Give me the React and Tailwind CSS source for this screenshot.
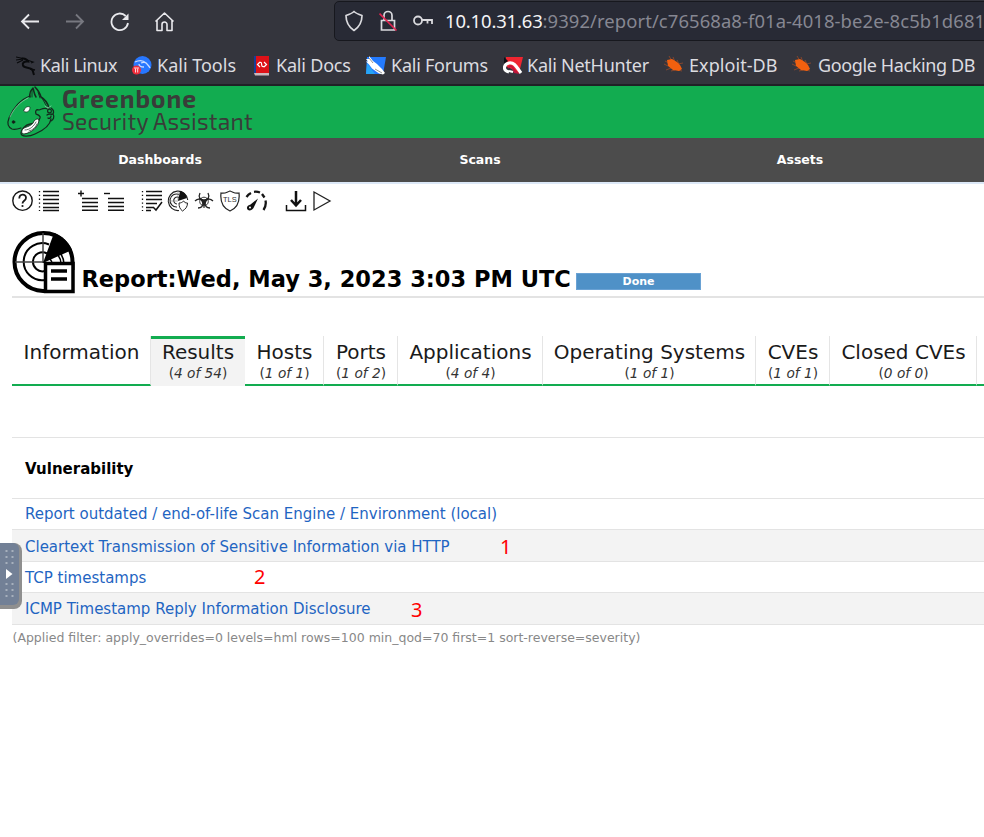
import React from "react";

const bookmarks = [
  { label: "Kali Linux", Icon: KaliIcon, box: "w-[116px] pl-[24px] tracking-[-0.4px]" },
  { label: "Kali Tools", Icon: ToolsIcon, box: "w-[121px] pl-[25px]" },
  { label: "Kali Docs", Icon: DocsIcon, box: "w-[113px] pl-[23px] tracking-[-0.2px]" },
  { label: "Kali Forums", Icon: ForumsIcon, box: "w-[137px] pl-[25px] tracking-[-0.24px]" },
  { label: "Kali NetHunter", Icon: HunterIcon, box: "w-[161px] pl-[24px] tracking-[-0.24px]" },
  { label: "Exploit-DB", Icon: BugIcon, box: "w-[128px] pl-[25px] tracking-[0.06px]" },
  { label: "Google Hacking DB", Icon: BugIcon, box: "w-[190px] pl-[26px] tracking-[-0.38px]" },
];

const tabs = [
  { label: "Information", width: "w-[139px]" },
  { label: "Results", count: "4 of 54", width: "w-[94px]", active: true },
  { label: "Hosts", count: "1 of 1", width: "w-[79px]" },
  { label: "Ports", count: "1 of 2", width: "w-[74px]" },
  { label: "Applications", count: "4 of 4", width: "w-[145px]" },
  { label: "Operating Systems", count: "1 of 1", width: "w-[213px]" },
  { label: "CVEs", count: "1 of 1", width: "w-[74px]" },
  { label: "Closed CVEs", count: "0 of 0", width: "w-[147px]" },
];

const rows = [
  { name: "Report outdated / end-of-life Scan Engine / Environment (local)", box: "h-[31px] bg-white leading-[31px]" },
  { name: "Cleartext Transmission of Sensitive Information via HTTP", box: "h-[32px] bg-[#f3f3f3] leading-[34px]", mark: "1", gap: "w-[475px]" },
  { name: "TCP timestamps", box: "h-[31px] bg-white leading-[33px]", mark: "2", gap: "w-[229px]", markBox: "-mt-[2px]" },
  { name: "ICMP Timestamp Reply Information Disclosure", box: "h-[32px] bg-[#f3f3f3] leading-[33px]", mark: "3", gap: "w-[386px]" },
];

function KaliIcon() {
  return (
    <svg width="20" height="20" viewBox="0 0 20 20" fill="none" stroke="#090a0c">
      <path d="M0 1l7 1.500M0 4l7-1M1 7l6-3" strokeWidth="1.200" />
      <path d="M6 2.500c3-.5 5 1 6 3-4-.5-6 1.500-5 4 1.500 3 7 1.500 9.500 4.500l1.500 5" strokeWidth="2" />
      <path d="M11 4l6 2-2 1M14 13l5 1" strokeWidth="1.300" />
    </svg>
  );
}

function ToolsIcon() {
  return (
    <svg width="20" height="20" viewBox="0 0 20 20" fill="none">
      <circle cx="10.500" cy="9" r="9" fill="#2777ff" />
      <path d="M3 6c4-2 8-2 11 1M9 7c2-1 5-1 6 1 1 1 2 2 3 4M7 8c0 2 2 3 5 3" stroke="#c9dcff" strokeWidth="1.300" />
      <circle cx="4.500" cy="14" r="4.500" fill="#ee2d3a" />
      <path d="M2 12h5M3.500 12.500v4M5.700 12.500v4" stroke="#ffd7dc" />
    </svg>
  );
}

function DocsIcon() {
  return (
    <svg width="17" height="20" viewBox="0 0 17 20" fill="none">
      <path d="M1 0h15v17H1z" fill="#dd1118" />
      <path d="M1 0h2v17H1z" fill="#173d98" />
      <path d="M1 17h15v2.500H2z" fill="#c9b8bd" />
      <path d="M7 6L4.500 8.500 7 11M11 6l2.500 2.500L11 11M7 6.500c3-1 0 5 4 4" stroke="#fff" strokeWidth="1.200" />
    </svg>
  );
}

function ForumsIcon() {
  return (
    <svg width="20" height="20" viewBox="0 0 20 20">
      <path d="M1 1h19l-3 17H0z" fill="#247bff" />
      <path d="M1 7l8 11H0z" fill="#27a5f7" />
      <path d="M0 3l3 0 0-3 4 5 4 3 5 5 3 4-2 1.500-4-1-7-5-3-4-3-3 2 0z" fill="#fff" />
      <path d="M3 2l4 5M9 13l7 4" stroke="#777" strokeWidth=".8" />
    </svg>
  );
}

function HunterIcon() {
  return (
    <svg width="20" height="20" viewBox="0 0 20 20" fill="none">
      <path d="M3 1h17l-4 16L3 10z" fill="#ef2530" />
      <path d="M8 11l9 7-6-1z" fill="#c0163c" />
      <path d="M1 1l4 4-4 3z" fill="#101117" />
      <path d="M6 16C-1 14 1 8 6 7c6-1 8 5 12 10" stroke="#fff" strokeWidth="3.200" />
      <path d="M5 12c3-4 5-1 7 3" stroke="#c0163c" strokeWidth="1.500" />
      <path d="M6 15l4 1" stroke="#fff" strokeWidth="2" />
    </svg>
  );
}

function BugIcon() {
  return (
    <svg width="20" height="18" viewBox="0 0 20 18">
      <path d="M1 5l4 2M5 0l3 5M9 1l2 5M13 4l2 4M14 8l5-1M0 8l4 2M2 14l5-2M7 15l4-1M14 14l4 1" stroke="#8d472b" strokeWidth=".9" fill="none" />
      <path d="M3 4l5-1 5 3 3 3 2 4-3 2-6-1-5-4z" fill="#f2600f" />
    </svg>
  );
}

function DogLogo() {
  return (
    <svg className="h-[52px] w-[62px] shrink-0" viewBox="0 0 62 52" fill="none" stroke="#14291d" strokeLinecap="round" strokeLinejoin="round">
      <path d="M30 10C21 13 13 22 9 32c-2 5-1 9 3 11 3 1 6 0 9-1" strokeWidth="1.200" />
      <path d="M28 12C20 16 14 22 10 31" stroke="#9bdcb3" strokeWidth="0.700" />
      <path d="M30 11c-1-4 0-6 3-9 1 3 1 6 3 9M35 1c3 3 5 6 6 10 5 3 7 7 8 11" strokeWidth="1.500" />
      <path d="M32 4v7M38 6l2 6M42 12l5 9" strokeWidth="0.900" />
      <path d="M24 24c1-3 4-4 6-3 0 4-2 5-4 5-2 0-3-1-2-2z" fill="#fff" strokeWidth="0.700" />
      <circle cx="13.500" cy="36" r="1.300" fill="#101c16" />
      <path d="M48 23c-4-2-6 0-9 1-3-1-4 1-3 4 2 1 5 2 4 4-2 5-6 5-10 6-5 1-9 6-9 9 0 4 8 4 14 1 7-3 15-8 16-15" strokeWidth="1.300" />
      <path d="M39 34c0 6-7 13-15 14-3 0-3-4 0-6 5-2 9-3 10-7 2-2 4-3 5-1z" fill="#fff" strokeWidth="0.900" />
      <path d="M25 44c5 0 9-4 11-8M29 45c4-1 7-4 8-7" stroke="#3f4f45" strokeWidth="0.800" />
      <circle cx="49.500" cy="25" r="1.900" strokeWidth="1.200" />
      <path d="M51 22c3 2 3 4 2 6 2 3 0 6-2 7M47 29c2-2 4 0 6-1M48 32c1 1 3 0 3-2" strokeWidth="1.300" />
      <path d="M48 22l3-2M45 20l3 2" stroke="#a3dfb8" strokeWidth="0.700" />
    </svg>
  );
}

function Lines({ sign, check }) {
  return (
    <svg width="22" height="22" viewBox="0 0 22 22" stroke="#111" fill="none">
      {sign ? (
        <>
          <path d="M4 8.500h16M4 12.500h16M4 16.500h16M4 20.300h16" strokeWidth="1.500" />
          <path d={sign === "plus" ? "M0 3.500h6M3 .5v6" : "M0 3.500h6"} strokeWidth="1.400" />
        </>
      ) : (
        <>
          <path d={check ? "M5 1.500h16M5 5.500h16M5 9.500h16M5 13.500h11M5 17.500h7M5 20.500h5" : "M5 1.500h16M5 5.500h16M5 9.500h16M5 13.500h16M5 17.500h16M5 20.500h16"} strokeWidth="1.500" />
          <path d="M1.500 1v20" strokeDasharray="1.300 2.500" strokeWidth="1.300" />
          {check && <path d="M12 17l3 3 6-8" strokeWidth="1.500" />}
        </>
      )}
    </svg>
  );
}

function HelpIcon() {
  return (
    <svg width="22" height="22" viewBox="0 0 22 22" fill="none" stroke="#181818">
      <circle cx="10.500" cy="10.700" r="9.700" strokeWidth="1.400" />
      <path d="M7.300 8.500c0-5 6.700-5 6.700-.7 0 3-3.500 3-3.500 5.700" strokeWidth="1.800" />
      <circle cx="10.500" cy="16" r="1.100" fill="#181818" stroke="none" />
    </svg>
  );
}

function RadarIcon() {
  return (
    <svg width="22" height="22" viewBox="0 0 22 22" fill="none" stroke="#222">
      <path d="M12 20.500A9.700 9.700 0 1 1 20.700 10" strokeWidth="1.200" />
      <path d="M10 17A6.500 6.500 0 1 1 12 4.500M10 14A3.500 3.500 0 1 1 12 7.500" strokeWidth="1.100" />
      <path d="M11 1v9M1 11h10" stroke="#888" strokeWidth=".7" />
      <path d="M11 11l2-10c4 1 6 3 7 7z" fill="#111" stroke="none" />
      <path d="M12 13c2 0 3-.5 4.500-2 1 1.500 2 2 4 2 0 4-2 6-5 8-2.500-2-3.500-4-3.500-8z" fill="#fff" strokeWidth="1" />
    </svg>
  );
}

function BiohazardIcon() {
  return (
    <svg width="22" height="22" viewBox="0 0 22 22" fill="none" stroke="#222">
      <path d="M7 3c-2 4 0 7 4 7s6-3 4-7M2 11c4-4 8-1 8 2 0 3-2 5-5 5M20 11c-4-4-8-1-8 2 0 3 2 5 5 5" strokeWidth="1.300" />
      <circle cx="11" cy="11.500" r="4.300" strokeWidth=".9" />
      <path d="M8 10h6l-2 5h-2z" fill="#222" stroke="none" />
      <path d="M11 12v6M10 10L6 8M12 10l4-2" strokeWidth="1.100" />
    </svg>
  );
}

function TlsIcon() {
  return (
    <svg width="22" height="22" viewBox="0 0 22 22" fill="none" stroke="#222">
      <path d="M2 3c4 1 6-1 9-2 3 1 5 3 9 2 1 9-2 15-9 18C4 18 1 12 2 3z" strokeWidth="1.200" />
      <text x="4" y="12" fill="#333" stroke="none" fontFamily="Liberation Sans" fontSize="7.500">TLS</text>
    </svg>
  );
}

function GaugeIcon() {
  return (
    <svg width="22" height="22" viewBox="0 0 22 22" fill="none" stroke="#151515">
      <path d="M1.500 7a12 12 0 0 1 4.500-4M9 1.800a12 12 0 0 1 6 .7M17 4l2.500 3.500M20.500 10.500c.8 3.500 0 6.500-2 9.500" strokeWidth="2.300" />
      <path d="M13 8.500L8.500 18c-2 3.500-7 3-6.500-.5.300-2 2-2.500 3.500-3z" fill="#111" stroke="none" />
      <circle cx="5" cy="17.500" r="1" fill="#fff" stroke="none" />
    </svg>
  );
}

function DownloadIcon() {
  return (
    <svg width="22" height="22" viewBox="0 0 22 22" fill="none" stroke="#101010">
      <path d="M1.500 15v5.500h19V15" strokeWidth="1.500" />
      <path d="M11 1v14M6 10l5 5.500 5-5.500" strokeWidth="2.500" />
    </svg>
  );
}

function PlayIcon() {
  return (
    <svg width="22" height="22" viewBox="0 0 22 22" fill="none" stroke="#222">
      <path d="M2 2l16 9-16 9z" strokeWidth="1.300" />
    </svg>
  );
}

function ReportIcon() {
  return (
    <svg className="h-[64px] w-[64px] shrink-0" viewBox="0 0 64 64" fill="none" stroke="#000">
      <path d="M34 61h-3A29 29 0 1 1 60.500 32v8" strokeWidth="4" />
      <path d="M33 50A18.500 18.500 0 1 1 37 14.500M33 41A9.500 9.500 0 1 1 35 23.500" strokeWidth="2" />
      <path d="M31 3v30M3 32h29" stroke="#444" strokeWidth="1.500" />
      <path d="M31 33L42 3c8 3 14 8 18 17z" fill="#000" stroke="none" />
      <path d="M38 29q2 2 2 5M46 25q3 4 3 9M49 24q3 5 3 10" strokeWidth="1.500" />
      <path d="M33.500 33.500h27.500v28H33.500z" fill="#fff" strokeWidth="3.500" />
      <path d="M39 41h16M39 49h16" strokeWidth="3.500" />
    </svg>
  );
}

function BrowserChrome() {
  return (
    <header className="h-[86px] overflow-hidden border-b-2 border-[#202126] bg-[#34353d] font-['Noto_Sans','Open_Sans',sans-serif] text-[#dcdce0]">
      <div className="flex h-[42px] pl-[20px]">
        <svg className="mt-[11px] mr-[25px] shrink-0" width="20" height="22" viewBox="0 0 20 22" fill="none" stroke="#e9e9ed" strokeWidth="1.800">
          <path d="M19 10.500H2M9 3.500l-7 7 7 7" />
        </svg>
        <svg className="mt-[11px] mr-[25px] shrink-0" width="20" height="22" viewBox="0 0 20 22" fill="none" stroke="#777880" strokeWidth="1.800">
          <path d="M1 10.500h17M11 3.500l7 7-7 7" />
        </svg>
        <svg className="mt-[11px] mr-[24px] shrink-0" width="20" height="22" viewBox="0 0 20 22" fill="none" stroke="#e9e9ed" strokeWidth="1.800">
          <path d="M18 12a8.300 8.300 0 1 1-2.300-7" />
          <path d="M18.500 2.500v6.500H12z" fill="#e9e9ed" stroke="none" />
        </svg>
        <svg className="mt-[11px] mr-[158px] shrink-0" width="22" height="22" viewBox="0 0 22 22" fill="none" stroke="#e9e9ed" strokeWidth="1.600" strokeLinejoin="round">
          <path d="M1.500 10.500l9-8.500 9 8.500M3 9.500v10h5v-6a2.500 2.500 0 0 1 5 0v6h5v-10" />
        </svg>
        <div className="mt-px flex h-[40px] w-[660px] shrink-0 overflow-hidden rounded-l-[5px] border border-[#17181e] bg-[#282a35] pl-[9px]">
          <svg className="mt-[8px] mr-[15px] shrink-0" width="20" height="22" viewBox="0 0 20 22" fill="none" stroke="#dadade" strokeWidth="1.700" strokeLinejoin="round">
            <path d="M10 1.500c2 2 5 3 8 4 0 7-2 11-8 15-6-4-8-8-8-15 3-1 6-2 8-4z" />
          </svg>
          <svg className="mt-[8px] mr-[13px] shrink-0" width="20" height="22" viewBox="0 0 20 22" fill="none" stroke="#dadade" strokeWidth="1.700">
            <path d="M2.500 10.500h13v9.500h-13zM5 10V5.500a4 4 0 0 1 8 0V10" />
            <path d="M.5 3.500l17 17" stroke="#df2450" />
          </svg>
          <svg className="mt-[9px] mr-[11px] shrink-0" width="22" height="18" viewBox="0 0 22 18" fill="none" stroke="#dadade" strokeWidth="1.800">
            <circle cx="6" cy="9.500" r="4" />
            <path d="M10 9h10v4M15.500 9v3.500" />
          </svg>
          <div className="mt-[7px] text-[18.450px] leading-[24px] tracking-[0.080px] whitespace-nowrap text-[#868792]">
            <span className="tracking-[-0.150px] text-[#f4f4f6]">10.10.31.63</span>:9392/report/c76568a8-f01a-4018-be2e-8c5b1d681
          </div>
        </div>
      </div>
      <nav className="flex h-[42px] pt-[13px] pl-[16px]">
        {bookmarks.map(({ label, Icon, box }) => (
          <a key={label} className={`relative h-[22px] shrink-0 text-[18px] leading-[21px] whitespace-nowrap ${box}`}>
            <span className="absolute top-px left-0"><Icon /></span>
            {label}
          </a>
        ))}
      </nav>
    </header>
  );
}

function Toolbar() {
  return (
    <div className="flex h-[42px] pt-[6px] pl-[12px]">
      <div className="flex w-[66px] gap-[4px]"><HelpIcon /><Lines /></div>
      <div className="flex w-[63px] gap-[4px]"><Lines sign="plus" /><Lines sign="minus" /></div>
      <div className="flex w-[144px] gap-[4px]">
        <Lines check /><RadarIcon /><BiohazardIcon /><TlsIcon /><GaugeIcon />
      </div>
      <div className="flex gap-[5px]"><DownloadIcon /><PlayIcon /></div>
    </div>
  );
}

export default function App() {
  return (
    <div className="relative h-[837px] w-[984px] overflow-hidden bg-white font-['DejaVu_Sans',sans-serif] text-black">
      <BrowserChrome />
      <div className="flex h-[52px] bg-[#12ac50] font-['Exo_2','Noto_Sans',sans-serif] text-[#393c39]">
        <DogLogo />
        <div>
          <div className="h-[25px] text-[24.500px] leading-[25px] font-bold tracking-[1px] whitespace-nowrap">Greenbone</div>
          <div className="h-[24px] text-[22.800px] leading-[21px] tracking-[0.250px] whitespace-nowrap">Security Assistant</div>
        </div>
      </div>
      <nav className="flex h-[44px] w-[1280px] bg-[#4c4c4c] text-center text-[12.500px] leading-[43px] font-bold text-white">
        <a className="w-[320px]">Dashboards</a>
        <a className="w-[320px]">Scans</a>
        <a className="w-[320px]">Assets</a>
      </nav>
      <div className="h-[2px] bg-[#dce8f7]" />
      <Toolbar />
      <main className="pl-[12px]">
        <div className="flex h-[72px] border-b-2 border-[#e3e3e3] pt-[4px]">
          <ReportIcon />
          <h1 className="mt-[35px] ml-[5.500px] h-[28px] w-[494.500px] text-[22.500px] leading-[28px] font-bold whitespace-nowrap">
            Report:Wed, May 3, 2023 3:03 PM UTC
          </h1>
          <div className="mt-[43px] h-[17px] w-[125px] border border-[#6aa2d4] bg-[#4f91c7] text-center text-[11px] leading-[16px] font-bold text-white">Done</div>
        </div>
        <div className="mt-[38px] flex h-[50px]">
          {tabs.map((tab) => (
            <div
              key={tab.label}
              className={`shrink-0 text-center whitespace-nowrap ${tab.width} ${tab.active ? "border-t-[3px] border-[#12ac50] bg-[#f3f3f3] pt-px" : "border-r border-b-2 border-r-[#e5e5e5] border-b-[#12ac50] pt-[4px] pl-px"}`}
            >
              <div className="h-[24px] text-[20px] leading-[24px] text-[#1a1a1a]">{tab.label}</div>
              {tab.count && <div className="text-[13.700px] leading-[18px] text-[#333]">(<i>{tab.count}</i>)</div>}
            </div>
          ))}
          <div className="flex-1 border-b-2 border-[#12ac50]" />
        </div>
        <div className="mt-[51px] h-[62px] border-y border-[#e3e3e3] pl-[13px] text-[15px] leading-[63px] font-bold">Vulnerability</div>
        {rows.map((row) => (
          <div key={row.name} className={`flex border-b border-[#e3e3e3] pl-[13px] text-[15px] whitespace-nowrap text-[#1f65c2] ${row.box}`}>
            <a className={`shrink-0 ${row.gap ?? ""}`}>{row.name}</a>
            {row.mark && <span className={`font-['Noto_Sans',sans-serif] text-[20px] text-[#ff0000] ${row.markBox ?? ""}`}>{row.mark}</span>}
          </div>
        ))}
        <div className="mt-[2px] pl-[0.500px] text-[12.500px] leading-[22px] whitespace-nowrap text-[#888]">
          (Applied filter: apply_overrides=0 levels=hml rows=100 min_qod=70 first=1 sort-reverse=severity)
        </div>
      </main>
      <div className="absolute top-[543px] left-0 h-[66px] w-[22px] rounded-r-[8px] bg-[#8f8f8f]">
        <svg className="h-[62px] w-[19px] rounded-r-[6px] bg-[#728096]" viewBox="0 0 19 62">
          <path d="M6.500 7v16M12.500 7v16M6.500 40v16M12.500 40v16" stroke="#a7b0bd" strokeWidth="2" strokeDasharray="2 4" />
          <path d="M6 26l6.500 5-6.500 5z" fill="#fff" />
        </svg>
      </div>
    </div>
  );
}
